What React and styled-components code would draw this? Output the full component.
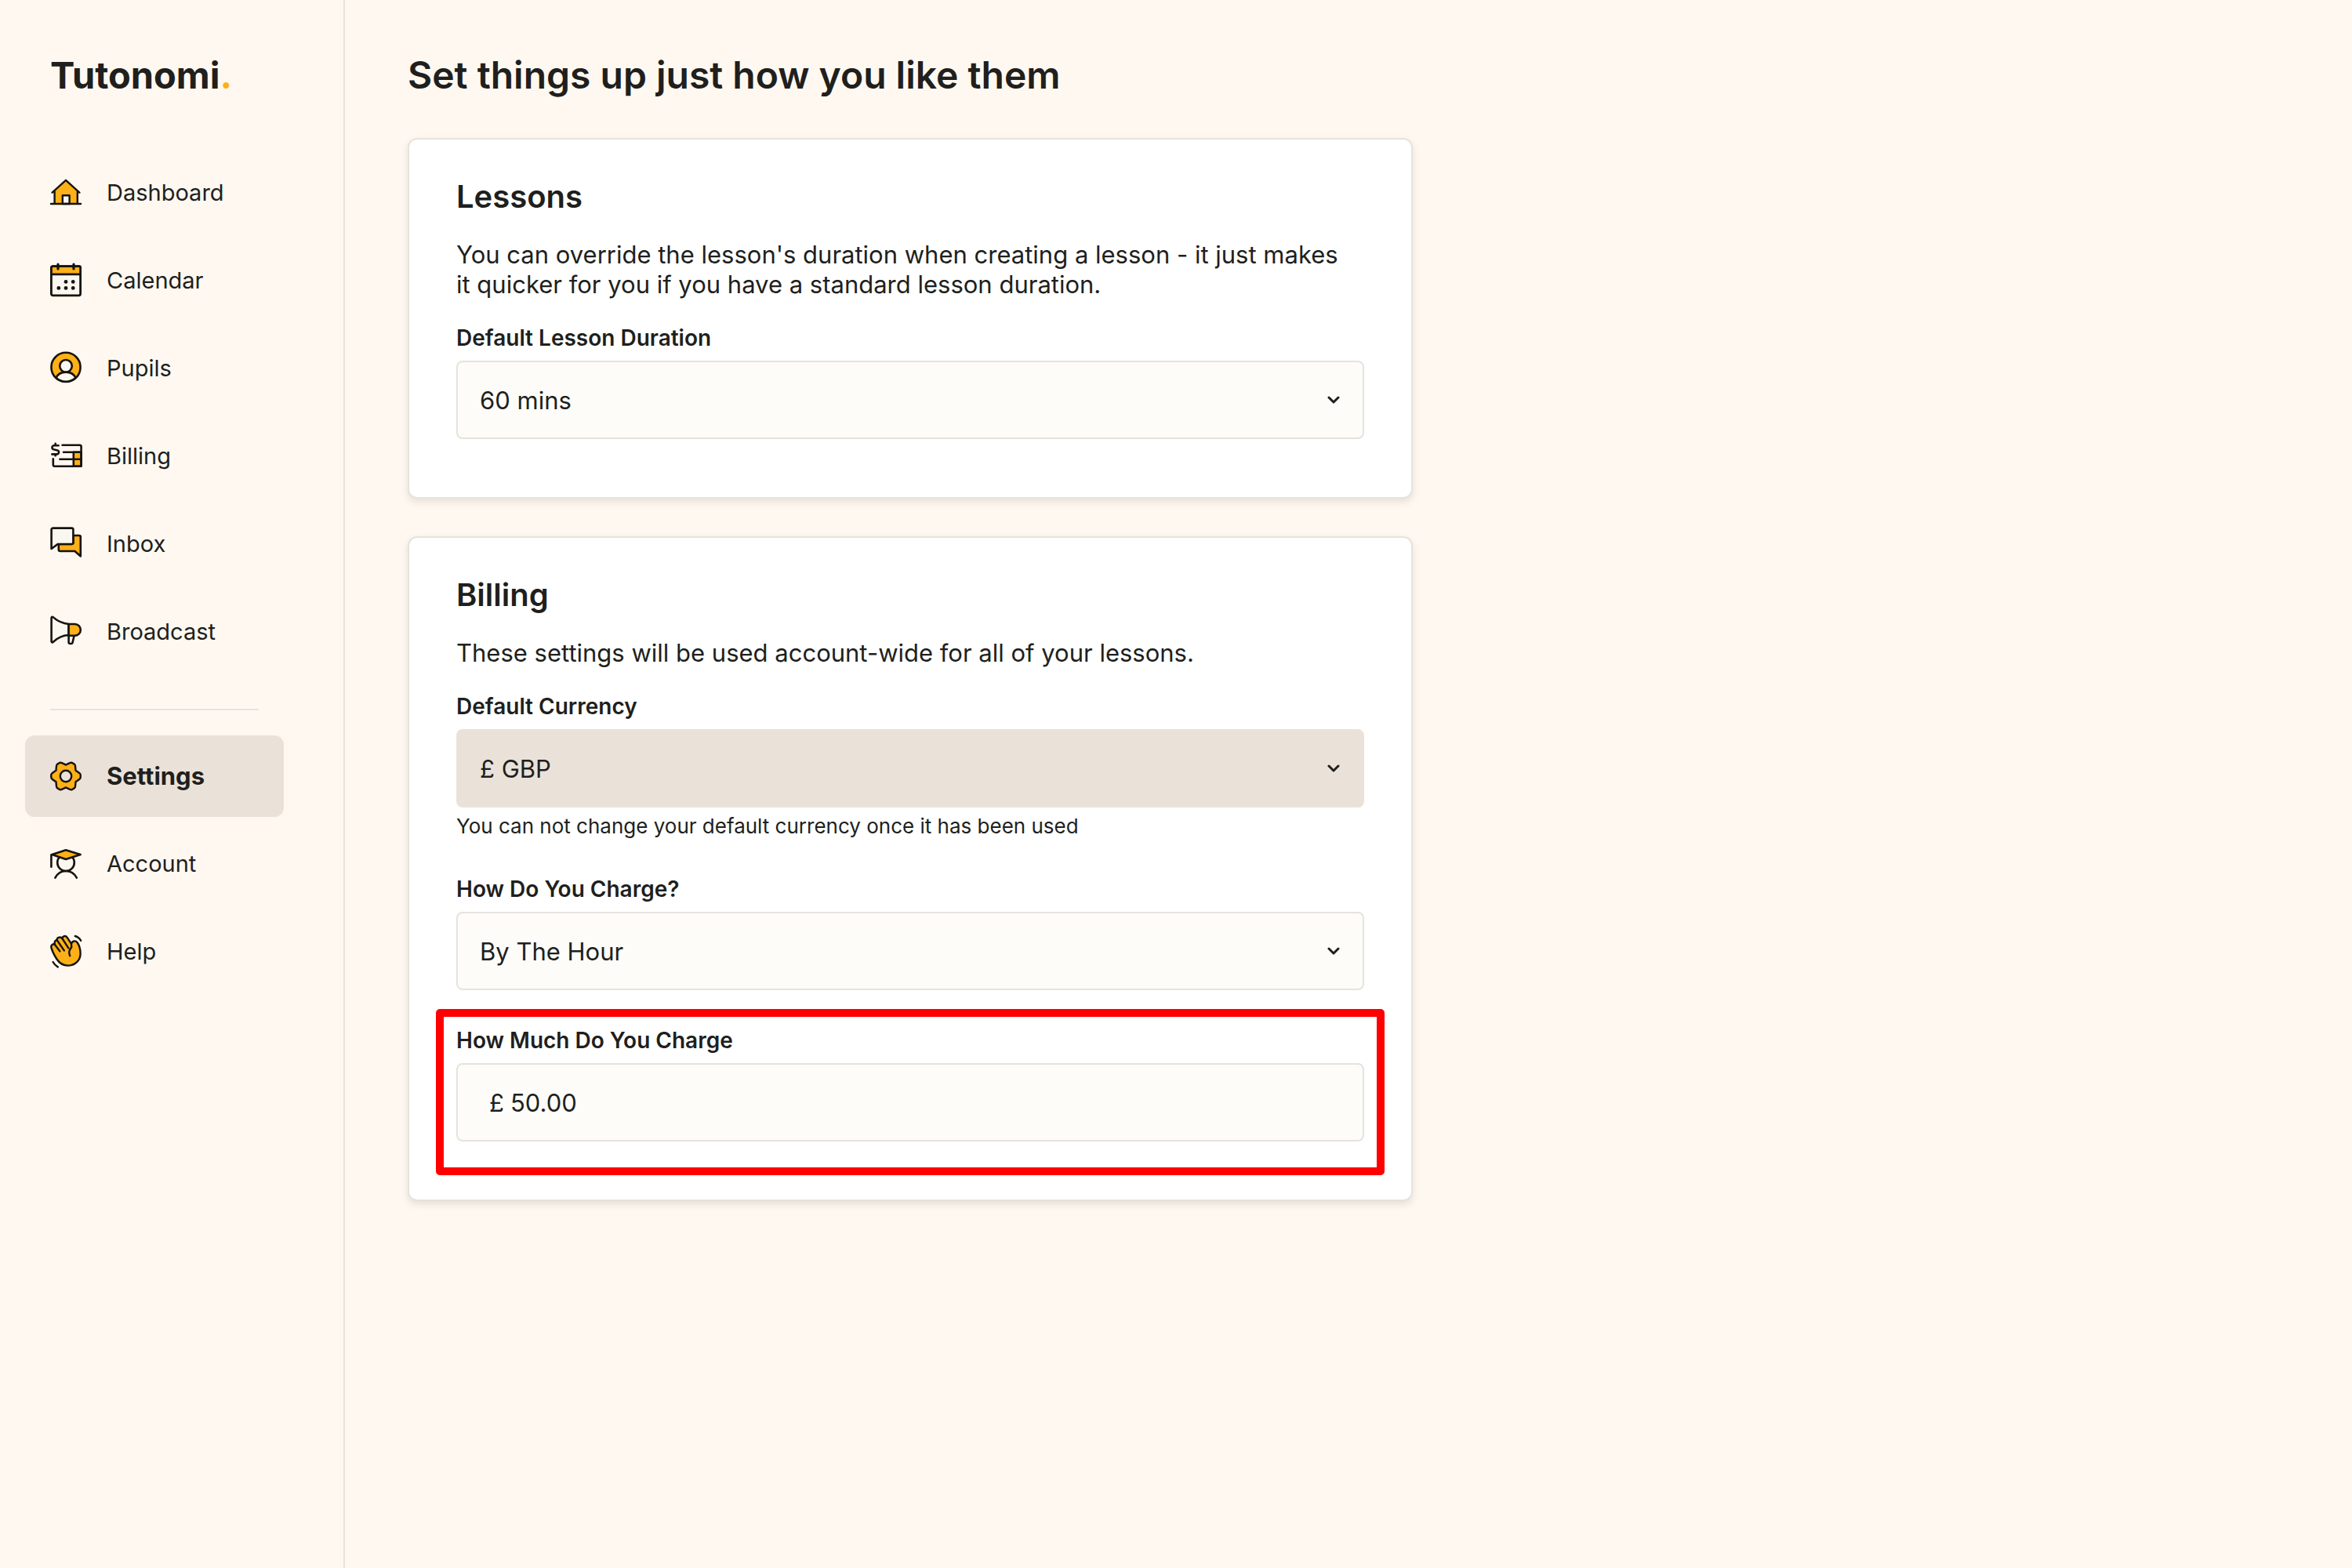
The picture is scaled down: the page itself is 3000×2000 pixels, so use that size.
import React from 'react';
import styled, { createGlobalStyle } from 'styled-components';

const colors = {
  page: '#fef8f1',
  card: '#ffffff',
  field: '#fdfcf8',
  muted: '#eae2d9',
  border: '#e6e3dd',
  text: '#201f1d',
  ink: '#17130f',
  brand: '#fdb017',
  alert: '#ff0000',
};

const GlobalStyle = createGlobalStyle`
  *, *::before, *::after {
    box-sizing: border-box;
  }

  body {
    margin: 0;
    background: ${colors.page};
    color: ${colors.text};
    font-family: Inter, 'Liberation Sans', sans-serif;
  }
`;

const Layout = styled.div`
  display: flex;
  min-height: 100vh;
`;

const Sidebar = styled.aside`
  flex: 0 0 440px;
  padding: 68px 76px 32px 32px;
  border-right: 2px solid ${colors.border};
`;

const Logo = styled.a`
  display: block;
  margin: 0 0 70px 32px;
  color: inherit;
  font-size: 47px;
  line-height: 56px;
  font-weight: 700;
  text-decoration: none;

  span {
    color: ${colors.brand};
  }
`;

const NavList = styled.ul`
  display: flex;
  flex-direction: column;
  gap: 8px;
  margin: 0;
  padding: 0;
  list-style: none;
`;

const NavLink = styled.a`
  display: flex;
  align-items: center;
  gap: 32px;
  height: 104px;
  padding: 0 32px;
  border-radius: 12px;
  background: ${({ $active }) => ($active ? colors.muted : 'transparent')};
  color: inherit;
  font-size: ${({ $active }) => ($active ? 31 : 29)}px;
  line-height: 38px;
  font-weight: ${({ $active }) => ($active ? 700 : 400)};
  text-decoration: none;
`;

const Divider = styled.hr`
  width: 100%;
  margin: 46px 0 32px;
  border: 0;
  border-top: 2px solid ${colors.border};
`;

const NavDivider = styled.div`
  padding: 0 32px;
`;

const Icon = styled.svg`
  flex: none;
  width: 40px;
  height: 44px;
  overflow: visible;
  fill: none;
  stroke: ${colors.ink};
  stroke-width: ${({ $weight }) => $weight || 2.4};
  stroke-linecap: round;
  stroke-linejoin: round;

  .brand {
    fill: ${colors.brand};
  }
  .paper {
    fill: #faf6f0;
  }
  .dot {
    fill: ${colors.ink};
    stroke: none;
  }
`;

const Main = styled.main`
  flex: 1;
  min-width: 0;
  padding: 68px 80px;
`;

const PageTitle = styled.h1`
  margin: 0 0 52px;
  font-size: 48px;
  line-height: 56px;
  font-weight: 600;
`;

const Cards = styled.div`
  display: flex;
  flex-direction: column;
  gap: 48px;
  max-width: 1282px;
`;

const Card = styled.section`
  padding: 48px 60px 74px;
  border: 2px solid ${colors.border};
  border-radius: 12px;
  background: ${colors.card};
  box-shadow: 0 4px 10px rgba(90, 75, 50, 0.14);
`;

const CardTitle = styled.h2`
  margin: 0 0 30px;
  font-size: 40px;
  line-height: 50px;
  font-weight: 600;
`;

const CardText = styled.p`
  margin: 0 0 32px;
  padding-right: 16px;
  font-size: 31px;
  line-height: 38px;
`;

const Fields = styled.div`
  display: flex;
  flex-direction: column;
  gap: 47px;
`;

const Field = styled.div`
  position: relative;

  ${({ $highlight }) =>
    $highlight &&
    `
      &::after {
        content: '';
        position: absolute;
        inset: -23px -26px -43px;
        border: 10px solid ${colors.alert};
        border-radius: 5px;
        pointer-events: none;
      }
    `}
`;

const Label = styled.label`
  display: block;
  margin-bottom: 12px;
  font-size: 28px;
  line-height: 34px;
  font-weight: 600;
`;

const Hint = styled.p`
  margin: 8px 0 0;
  font-size: 26px;
  line-height: 32px;
`;

// the chevron shares the only grid cell with the select
const SelectBox = styled.div`
  display: grid;
  align-items: center;

  > * {
    grid-area: 1 / 1;
  }

  svg {
    justify-self: end;
    width: 16px;
    height: 10px;
    margin-right: 31px;
    fill: none;
    stroke: ${colors.text};
    stroke-width: 3;
    stroke-linecap: round;
    stroke-linejoin: round;
    pointer-events: none;
  }
`;

const Select = styled.select`
  appearance: none;
  width: 100%;
  height: 100px;
  padding: 0 64px 0 28px;
  border: 2px solid ${colors.border};
  border-radius: 8px;
  background: ${colors.field};
  color: ${colors.text};
  font: inherit;
  font-size: 31px;

  &:disabled {
    border-color: ${colors.muted};
    background: ${colors.muted};
    opacity: 1;
  }
`;

const MoneyBox = styled.div`
  display: flex;
  align-items: center;
  gap: 8px;
  height: 100px;
  padding: 0 28px 0 40px;
  border: 2px solid ${colors.border};
  border-radius: 8px;
  background: ${colors.field};
  font-size: 31px;
`;

const MoneyInput = styled.input`
  flex: 1;
  min-width: 0;
  padding: 0;
  border: 0;
  background: none;
  color: ${colors.text};
  font: inherit;
  outline: 0;
`;

const HouseIcon = () => (
  <Icon viewBox="0 0 40 44" aria-hidden="true">
    <path className="brand" d="M5.6 36V19.6L20 5.8l14.8 13.8V36z" stroke="none" />
    <path className="paper" d="M15.8 36V25.2h8.8V36z" />
    <path d="M2.6 21.6 20 5.8l17.4 15.8M5.6 19.5V36M34.8 19.5V36M1 36h38" />
  </Icon>
);

const CalendarIcon = () => (
  <Icon viewBox="0 0 40 44" $weight={2.8} aria-hidden="true">
    <rect className="paper" x="1.4" y="3.6" width="37.2" height="37.2" rx="2" />
    <path className="brand" d="M1.4 13.8V5.6a2 2 0 0 1 2-2h33.2a2 2 0 0 1 2 2v8.2z" />
    <path d="M10 1v6M30 1v6" strokeWidth="3.2" />
    {[
      [20, 23.4],
      [29.2, 23.4],
      [10.8, 31.4],
      [20, 31.4],
      [29.2, 31.4],
    ].map(([cx, cy]) => (
      <circle key={`${cx}-${cy}`} className="dot" cx={cx} cy={cy} r="2.4" />
    ))}
  </Icon>
);

const PupilsIcon = () => (
  <Icon viewBox="0 0 40 44" $weight={2.6} aria-hidden="true">
    <circle className="brand" cx="20" cy="20.4" r="18.6" />
    <path
      className="paper"
      d="M7.6 34C9.4 29.6 14.2 26.6 20 26.6S30.6 29.6 32.4 34A18.6 18.6 0 0 1 7.6 34z"
    />
    <circle className="paper" cx="20" cy="18.8" r="7.8" />
  </Icon>
);

const BillingIcon = () => (
  <Icon viewBox="0 0 40 44" $weight={2.6} aria-hidden="true">
    <path className="brand" d="M29.8 16.8h9.8v18h-9.8z" />
    <path d="M15.6 7.8h22a2 2 0 0 1 2 2v23a2 2 0 0 1-2 2H5.8a2 2 0 0 1-2-2v-7.4M17 16.8h22.6M12.4 25.8h27.2" />
    <path d="M10.6 8.2H5a2.6 2.6 0 0 0-.6 5.1l5 1.1a2.6 2.6 0 0 1-.6 5H2.4M6.7 5.8v2.4M6.7 19.6v1.6" />
  </Icon>
);

const InboxIcon = () => (
  <Icon viewBox="0 0 40 44" $weight={2.6} aria-hidden="true">
    <path
      className="brand"
      d="M29.4 11h7.4a2 2 0 0 1 2 2v24.4L31.4 31H12.8a2 2 0 0 1-2-2v-7h16.6a2 2 0 0 0 2-2z"
    />
    <path className="paper" d="M1.6 3.6a2 2 0 0 1 2-2h23.8a2 2 0 0 1 2 2V20a2 2 0 0 1-2 2H9.6l-8 6z" />
  </Icon>
);

const BroadcastIcon = () => (
  <Icon viewBox="0 0 40 44" $weight={2.6} aria-hidden="true">
    <path className="paper" d="M23.6 26.8v8.6a1.8 1.8 0 0 0 1.8 1.6h1.4a2 2 0 0 0 1.8-1.6l2-8.6" />
    <path
      className="paper"
      d="M1.6 4a1.2 1.2 0 0 1 2-.9C9 7.8 16 11.2 23.6 12v14C16 26.4 9 29.8 3.6 35a1.2 1.2 0 0 1-2-.9z"
    />
    <path className="brand" d="M23.6 12h7.8a7.4 7.4 0 0 1 0 14.8h-7.8z" />
  </Icon>
);

// six teeth around (20, 22), the first one pointing right
const polar = (deg, r) => {
  const a = (deg * Math.PI) / 180;
  return `${(20 + r * Math.cos(a)).toFixed(2)} ${(22 + r * Math.sin(a)).toFixed(2)}`;
};

const gearPath = [0, 60, 120, 180, 240, 300]
  .map(
    (deg, i) =>
      `${i ? 'L' : 'M'}${polar(deg - 13, 17.6)} Q${polar(deg - 10, 18.8)} ${polar(deg - 5, 18.8)}` +
      ` L${polar(deg + 5, 18.8)} Q${polar(deg + 10, 18.8)} ${polar(deg + 13, 17.6)}` +
      ` L${polar(deg + 25, 15.2)} Q${polar(deg + 30, 13.8)} ${polar(deg + 35, 15.2)}`
  )
  .join(' ');

const SettingsIcon = () => (
  <Icon viewBox="0 0 40 44" aria-hidden="true">
    <path className="brand" d={`${gearPath}z`} />
    <circle cx="20" cy="22" r="7.2" fill={colors.muted} />
  </Icon>
);

const AccountIcon = () => (
  <Icon viewBox="0 0 40 44" $weight={2.6} aria-hidden="true">
    <circle className="paper" cx="20" cy="20.2" r="10.8" />
    <path className="brand" d="M2.4 10 20 4.2 38.6 10 20 16z" />
    <path d="M1.4 10.2v15.6M6.4 39.6C9.4 34 14.4 31 20 31s10.8 3 13.8 8.6" />
  </Icon>
);

const HelpIcon = () => (
  <Icon viewBox="0 0 40 44" aria-hidden="true">
    <path
      className="brand"
      d="M12.4 21.4 6.2 13.2C4 11 .6 13.4 1.4 16.6c1 4 3.8 9.6 6.8 14.4 3.8 6 9 8.8 15.2 8.6 8.8-.4 15.2-7 15.2-15.4 0-5.2-1.6-10.6-4-14-2.2-3-6.6-2-7.6 1.6L21.6 3.6c-2-2.8-6.2-1.6-6 1.8-2.2-3.2-7-2-7 1.6-2.6.4-3.8 3-2.4 6.2"
    />
    <path d="m8.6 7 9.2 13.4M15.6 5.4l7.6 11.8M27 11.8l.2 4.6c-3 3-4 6.4-2 10.8M31.8 2c3.2.8 5.6 2.8 7.4 5.8M3.6 35c1.4 2.6 3.4 4.8 6.2 6.4" />
  </Icon>
);

const primaryNav = [
  { label: 'Dashboard', icon: HouseIcon },
  { label: 'Calendar', icon: CalendarIcon },
  { label: 'Pupils', icon: PupilsIcon },
  { label: 'Billing', icon: BillingIcon },
  { label: 'Inbox', icon: InboxIcon },
  { label: 'Broadcast', icon: BroadcastIcon },
];

const secondaryNav = [
  { label: 'Settings', icon: SettingsIcon, active: true },
  { label: 'Account', icon: AccountIcon },
  { label: 'Help', icon: HelpIcon },
];

const Nav = ({ items }) => (
  <NavList>
    {items.map(({ label, icon: NavIcon, active }) => (
      <li key={label}>
        <NavLink
          href={`#${label.toLowerCase()}`}
          $active={active}
          aria-current={active ? 'page' : undefined}
        >
          <NavIcon />
          {label}
        </NavLink>
      </li>
    ))}
  </NavList>
);

const SelectField = ({ id, label, options, hint, disabled }) => (
  <Field>
    <Label htmlFor={id}>{label}</Label>
    <SelectBox>
      <Select id={id} disabled={disabled}>
        {options.map((option) => (
          <option key={option}>{option}</option>
        ))}
      </Select>
      <svg viewBox="0 0 16 10" aria-hidden="true">
        <path d="m2 2 6 6 6-6" />
      </svg>
    </SelectBox>
    {hint && <Hint>{hint}</Hint>}
  </Field>
);

const App = () => {
  return (
    <>
      <GlobalStyle />
      <Layout>
        <Sidebar>
          <Logo href="#home">
            Tutonomi<span>.</span>
          </Logo>
          <nav>
            <Nav items={primaryNav} />
            <NavDivider>
              <Divider />
            </NavDivider>
            <Nav items={secondaryNav} />
          </nav>
        </Sidebar>
        <Main>
          <PageTitle>Set things up just how you like them</PageTitle>
          <Cards>
            <Card>
              <CardTitle>Lessons</CardTitle>
              <CardText>
                You can override the lesson's duration when creating a lesson - it just makes it
                quicker for you if you have a standard lesson duration.
              </CardText>
              <Fields>
                <SelectField
                  id="duration"
                  label="Default Lesson Duration"
                  options={['60 mins', '45 mins', '30 mins']}
                />
              </Fields>
            </Card>
            <Card>
              <CardTitle>Billing</CardTitle>
              <CardText>These settings will be used account-wide for all of your lessons.</CardText>
              <Fields>
                <SelectField
                  id="currency"
                  label="Default Currency"
                  options={['£ GBP']}
                  hint="You can not change your default currency once it has been used"
                  disabled
                />
                <SelectField
                  id="charge-type"
                  label="How Do You Charge?"
                  options={['By The Hour', 'By The Lesson']}
                />
                <Field $highlight>
                  <Label htmlFor="rate">How Much Do You Charge</Label>
                  <MoneyBox>
                    <span>£</span>
                    <MoneyInput id="rate" type="text" inputMode="decimal" defaultValue="50.00" />
                  </MoneyBox>
                </Field>
              </Fields>
            </Card>
          </Cards>
        </Main>
      </Layout>
    </>
  );
};

export default App;
